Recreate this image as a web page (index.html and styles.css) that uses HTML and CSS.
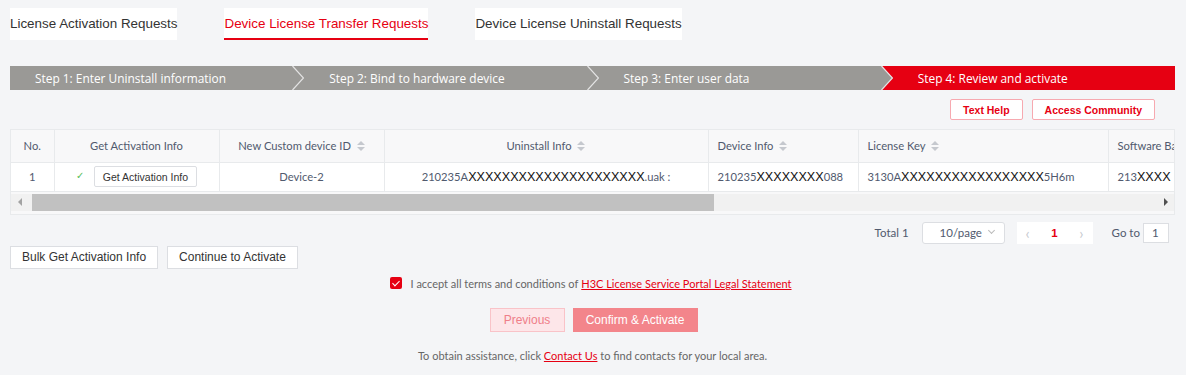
FILE: index.html
```html
<!DOCTYPE html>
<html lang="en">
<head>
    <meta charset="UTF-8">
    <title>Device License Transfer Requests</title>
    <link rel="stylesheet" href="styles.css">
</head>
<body>
    <div class="page">
        <!-- Request type tabs -->
        <nav class="tabs">
            <a class="tab">License Activation Requests</a>
            <a class="tab active">Device License Transfer Requests</a>
            <a class="tab">Device License Uninstall Requests</a>
        </nav>

        <!-- Wizard steps -->
        <div class="steps">
            <div class="step">Step 1: Enter Uninstall information</div>
            <svg class="sep" width="12" height="24" viewBox="0 0 12 24">
                <polygon points="0,0 12,0 12,24 0,24" fill="#9a9996"/>
                <polyline points="0.5,0 11.5,12 0.5,24" fill="none" stroke="#e4e4e4" stroke-width="1.2"/>
            </svg>
            <div class="step">Step 2: Bind to hardware device</div>
            <svg class="sep" width="12" height="24" viewBox="0 0 12 24">
                <polygon points="0,0 12,0 12,24 0,24" fill="#9a9996"/>
                <polyline points="0.5,0 11.5,12 0.5,24" fill="none" stroke="#e4e4e4" stroke-width="1.2"/>
            </svg>
            <div class="step">Step 3: Enter user data</div>
            <svg class="sep" width="12" height="24" viewBox="0 0 12 24">
                <polygon points="0,0 0.5,0 11.5,12 0.5,24 0,24" fill="#9a9996"/>
                <polygon points="0.5,0 12,0 12,24 0.5,24 11.5,12" fill="#e60012"/>
                <polyline points="0.5,0 11.5,12 0.5,24" fill="none" stroke="#e4e4e4" stroke-width="1.2"/>
            </svg>
            <div class="step current">Step 4: Review and activate</div>
        </div>

        <div class="help-links">
            <button class="help-btn">Text Help</button>
            <button class="help-btn">Access Community</button>
        </div>

        <!-- Request table -->
        <div class="grid">
            <div class="grid-body">
                <table>
                    <colgroup>
                        <col style="width:43px">
                        <col style="width:165px">
                        <col style="width:165px">
                        <col style="width:324px">
                        <col style="width:150px">
                        <col style="width:250px">
                        <col style="width:160px">
                    </colgroup>
                    <thead>
                        <tr>
                            <th class="center">No.</th>
                            <th class="center">Get Activation Info</th>
                            <th class="center">New Custom device ID <span class="sort"></span></th>
                            <th class="center">Uninstall Info <span class="sort"></span></th>
                            <th>Device Info <span class="sort"></span></th>
                            <th>License Key <span class="sort"></span></th>
                            <th>Software Baseline <span class="sort"></span></th>
                        </tr>
                    </thead>
                    <tbody>
                        <tr>
                            <td class="center">1</td>
                            <td class="center">
                                <span class="ok">&#10003;</span>
                                <button class="cell-btn">Get Activation Info</button>
                            </td>
                            <td class="center">Device-2</td>
                            <td class="center">210235A<span class="mask">XXXXXXXXXXXXXXXXXXXXX</span>.uak :</td>
                            <td>210235<span class="mask">XXXXXXXX</span>088</td>
                            <td>3130A<span class="mask">XXXXXXXXXXXXXXXXX</span>5H6m</td>
                            <td>213<span class="mask">XXXX</span></td>
                        </tr>
                    </tbody>
                </table>
            </div>
            <div class="hscroll">
                <span class="arrow left"></span>
                <div class="track"><div class="thumb"></div></div>
                <span class="arrow right"></span>
            </div>
        </div>

        <div class="pager-row">
            <span class="total">Total 1</span>
            <div class="size-select">10/page <span class="caret"></span></div>
            <div class="pager">
                <span class="nav">&lsaquo;</span>
                <span class="num">1</span>
                <span class="nav">&rsaquo;</span>
            </div>
            <span class="goto">Go to <span class="goto-input">1</span></span>
        </div>

        <div class="bulk-actions">
            <button class="plain-btn">Bulk Get Activation Info</button>
            <button class="plain-btn">Continue to Activate</button>
        </div>

        <label class="agree">
            <span class="checkbox"></span>
            I accept all terms and conditions of <a>H3C License Service Portal Legal Statement</a>
        </label>

        <div class="submit-row">
            <button class="prev-btn">Previous</button>
            <button class="confirm-btn">Confirm &amp; Activate</button>
        </div>

        <p class="assist">To obtain assistance, click <a>Contact Us</a> to find contacts for your local area.</p>
    </div>
</body>
</html>
```

FILE: styles.css
```css
:root {
    --red: #e60012;
    --gray-step: #9a9996;
    --border: #e8eaec;
    --text: #515a6e;
    --muted: #666666;
}

* {
    margin: 0;
    padding: 0;
    box-sizing: border-box;
}

body {
    background: #f4f5f7;
    font-family: 'Lato', 'Liberation Sans', sans-serif;
    color: #333;
    overflow: hidden;
}

.page {
    padding: 8px 11px 0 10px;
}

/* tabs */
.tabs {
    display: flex;
    gap: 47px;
}

.tab {
    background: #fff;
    height: 32px;
    line-height: 31px;
    font-family: 'Liberation Sans', Arial, sans-serif;
    font-size: 13.4px;
    color: #333;
    white-space: nowrap;
}

.tab.active {
    color: var(--red);
    border-bottom: 2px solid var(--red);
}

/* steps */
.steps {
    display: flex;
    margin-top: 26px;
    height: 24px;
}

.step {
    flex: 1;
    background: var(--gray-step);
    color: #fff;
    font-family: 'Open Sans', sans-serif;
    font-size: 11.9px;
    line-height: 24px;
    padding-left: 25px;
    white-space: nowrap;
}

.step.current {
    background: var(--red);
}

.sep {
    display: block;
    flex: none;
}

/* help buttons */
.help-links {
    display: flex;
    justify-content: flex-end;
    gap: 9px;
    margin-top: 9px;
    padding-right: 20px;
}

.help-btn {
    background: #fff;
    border: 1px solid #f7a9b0;
    border-radius: 2px;
    color: var(--red);
    font-family: 'Liberation Sans', Arial, sans-serif;
    font-weight: 700;
    font-size: 10.5px;
    height: 21px;
    padding: 0 12px;
}

/* table */
.grid {
    margin-top: 9px;
    border: 1px solid var(--border);
    background: #f8f8f9;
    padding-bottom: 3px;
}

.grid-body {
    overflow: hidden;
}

table {
    border-collapse: collapse;
    table-layout: fixed;
    width: 1257px;
    font-size: 11.2px;
    color: var(--text);
}

th, td {
    border-right: 1px solid var(--border);
    border-bottom: 1px solid var(--border);
    text-align: left;
    padding: 0 9px;
    white-space: nowrap;
    overflow: hidden;
    font-weight: 400;
}

th {
    height: 32px;
    background: #f8f8f9;
}

td {
    height: 29px;
    background: #fff;
}

.center {
    text-align: center;
}

.sort {
    display: inline-block;
    width: 8px;
    height: 10px;
    margin-left: 3px;
    vertical-align: -1px;
    position: relative;
}

.sort::before,
.sort::after {
    content: '';
    position: absolute;
    left: 0;
    border-left: 4px solid transparent;
    border-right: 4px solid transparent;
}

.sort::before {
    top: 0;
    border-bottom: 4px solid #c5c8ce;
}

.sort::after {
    bottom: 0;
    border-top: 4px solid #c5c8ce;
}

.mask {
    font-family: 'Liberation Sans', Arial, sans-serif;
    font-size: 12.6px;
    color: #111;
}

.ok {
    color: #58c05a;
    font-size: 10px;
    margin-right: 7px;
}

.cell-btn {
    background: #fff;
    border: 1px solid #dcdee2;
    border-radius: 2px;
    font-family: 'Liberation Sans', Arial, sans-serif;
    font-size: 10.5px;
    color: #333;
    height: 21px;
    padding: 0 8px;
    vertical-align: middle;
}

/* fake horizontal scrollbar */
.hscroll {
    display: flex;
    align-items: center;
    height: 17px;
    margin-top: 2px;
    background: #f1f1f1;
}

.arrow {
    width: 17px;
    height: 17px;
    display: flex;
    justify-content: center;
    align-items: center;
}

.arrow::before {
    content: '';
    border-top: 4px solid transparent;
    border-bottom: 4px solid transparent;
}

.arrow.left::before {
    border-right: 4px solid #a3a3a3;
}

.arrow.right::before {
    border-left: 4px solid #505050;
}

.track {
    flex: 1;
    height: 17px;
    padding: 0 4px;
}

.thumb {
    width: 682px;
    height: 17px;
    background: #c1c1c1;
}

/* pagination */
.pager-row {
    display: flex;
    justify-content: flex-end;
    align-items: center;
    margin-top: 6px;
    height: 24px;
    font-size: 11.5px;
    color: var(--text);
    padding-right: 6px;
}

.size-select {
    margin-left: 13px;
    width: 83px;
    height: 22px;
    line-height: 20px;
    border: 1px solid #dcdee2;
    border-radius: 3px;
    background: #fff;
    padding-left: 17px;
    position: relative;
}

.caret {
    position: absolute;
    right: 10px;
    top: 5px;
    width: 5px;
    height: 5px;
    border-right: 1px solid #bbb;
    border-bottom: 1px solid #bbb;
    transform: rotate(45deg);
}

.pager {
    display: flex;
    align-items: center;
    justify-content: space-between;
    margin-left: 12px;
    width: 76px;
    height: 22px;
    background: #fff;
    padding: 0 9px;
}

.nav {
    color: #c5c8ce;
    font-size: 15px;
}

.num {
    color: var(--red);
    font-weight: 700;
    font-family: 'Liberation Sans', Arial, sans-serif;
}

.goto {
    margin-left: 19px;
    display: flex;
    align-items: center;
    gap: 3px;
}

.goto-input {
    display: inline-block;
    width: 26px;
    height: 20px;
    line-height: 18px;
    border: 1px solid #dcdee2;
    background: #fff;
    padding-left: 8px;
}

/* bulk buttons */
.bulk-actions {
    display: flex;
    gap: 9px;
    margin-top: 1px;
}

.plain-btn {
    background: #fff;
    border: 1px solid #dcdee2;
    height: 23px;
    padding: 0 11px;
    font-family: 'Liberation Sans', Arial, sans-serif;
    font-size: 12px;
    color: #333;
}

/* agreement */
.agree {
    display: flex;
    align-items: center;
    justify-content: center;
    margin-top: 8px;
    font-size: 11px;
    color: var(--muted);
    padding-right: 3px;
}

.checkbox {
    width: 12px;
    height: 12px;
    background: var(--red);
    border-radius: 2px;
    margin-right: 8px;
    position: relative;
}

.checkbox::after {
    content: '';
    position: absolute;
    left: 4px;
    top: 1.5px;
    width: 3px;
    height: 6px;
    border-right: 1.5px solid #fff;
    border-bottom: 1.5px solid #fff;
    transform: rotate(45deg);
}

.agree a,
.assist a {
    color: var(--red);
    text-decoration: underline;
}

.agree a {
    margin-left: 3px;
}

/* submit */
.submit-row {
    display: flex;
    justify-content: center;
    gap: 8px;
    margin-top: 18px;
    padding-left: 2px;
}

.prev-btn,
.confirm-btn {
    height: 24px;
    font-family: 'Liberation Sans', Arial, sans-serif;
    font-size: 12px;
    white-space: nowrap;
}

.prev-btn {
    background: #fde6e9;
    border: 1px solid #f9c3c8;
    color: #ef7f89;
    width: 75px;
}

.confirm-btn {
    background: #f3858b;
    border: 1px solid #f3858b;
    color: #fff;
    width: 125px;
}

.assist {
    text-align: center;
    margin-top: 17px;
    font-size: 11px;
    color: var(--muted);
}
```
